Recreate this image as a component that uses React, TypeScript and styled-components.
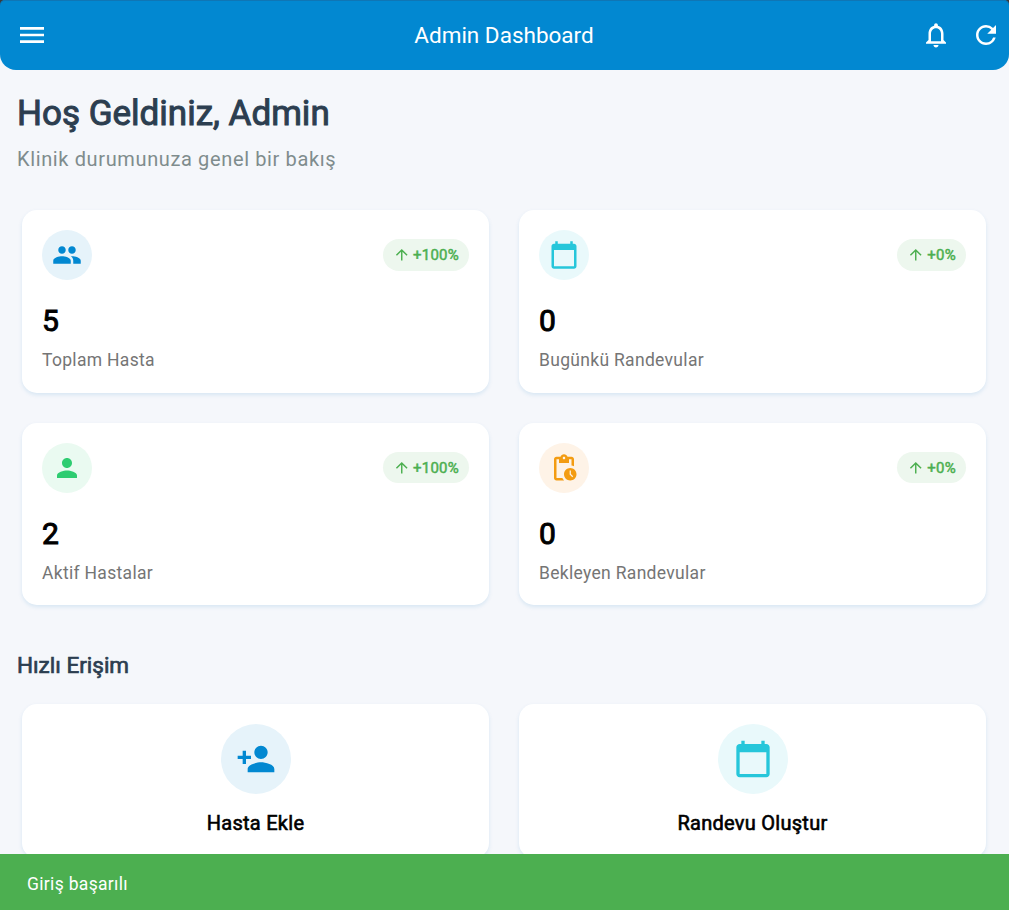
import React from "react";
import styled, { createGlobalStyle } from "styled-components";
import type { IconType } from "react-icons";
import {
  MdMenu,
  MdNotificationsNone,
  MdRefresh,
  MdPeople,
  MdPerson,
  MdCalendarToday,
  MdPendingActions,
  MdPersonAdd,
  MdArrowUpward,
} from "react-icons/md";

const GlobalStyle = createGlobalStyle`
  * { box-sizing: border-box; }
  html, body { margin: 0; padding: 0; }
  body {
    font-family: Roboto, "Liberation Sans", sans-serif;
    background: #f5f7fb;
    overflow: hidden;
  }
  svg { display: block; flex: none; }
`;

const Screen = styled.div`
  height: 910px;
  display: flex;
  flex-direction: column;
  overflow: hidden;
`;

const TopFrame = styled.div`
  flex: none;
  background: linear-gradient(#3a3a3c 0 8px, #f5f7fb 8px);
`;

const AppBar = styled.header`
  height: 70px;
  display: grid;
  grid-template-columns: 1fr auto 1fr;
  align-items: center;
  padding: 0 8px;
  color: #fff;
  background: #0288d1;
  border-radius: 5px 5px 16px 16px;
  box-shadow: inset 0 1px 0 #0f76b5;
`;

const MenuSlot = styled.div`
  padding-left: 8px;
`;

const AppTitle = styled.h1`
  margin: 0;
  padding-right: 1px;
  font-size: 22.5px;
  font-weight: 400;
  line-height: 30px;
`;

const BarActions = styled.div`
  display: flex;
  justify-content: flex-end;
  gap: 20px;
`;

const Content = styled.main`
  flex: 1;
  min-height: 0;
  overflow: hidden;
  padding: 23px 18px 0 17px;
`;

const Welcome = styled.h2`
  margin: 0;
  font-size: 35px;
  font-weight: 400;
  line-height: 42px;
  -webkit-text-stroke: 1px currentColor;
  color: #2c3e50;
`;

const Subtitle = styled.p`
  margin: 12px 0 0;
  font-size: 20px;
  line-height: 24px;
  letter-spacing: 0.63px;
  color: #7f8c8d;
`;

const CardGrid = styled.div<{ $top: number }>`
  display: grid;
  grid-template-columns: 467px 467px;
  gap: 30px;
  padding-left: 5px;
  margin-top: ${(p) => p.$top}px;
`;

const Card = styled.section`
  background: #fff;
  border-radius: 15px;
  box-shadow: 0 2px 4px rgba(2, 119, 189, 0.12);
`;

const StatCard = styled(Card)`
  height: 182.5px;
  padding: 20px;
`;

const StatTop = styled.div`
  display: flex;
  align-items: center;
  justify-content: space-between;
`;

const IconCircle = styled.div<{ $size: number; $color: string; $bg: string }>`
  width: ${(p) => p.$size}px;
  height: ${(p) => p.$size}px;
  border-radius: 50%;
  display: flex;
  align-items: center;
  justify-content: center;
  color: ${(p) => p.$color};
  background: ${(p) => p.$bg};
`;

const Badge = styled.div`
  height: 31.5px;
  display: flex;
  align-items: center;
  gap: 2.5px;
  padding: 0 10px;
  border-radius: 16px;
  font-size: 15px;
  letter-spacing: 0.25px;
  color: #4caf50;
  background: #edf7ee;
`;

const BadgeText = styled.span`
  padding-top: 1.5px;
  line-height: 19px;
  -webkit-text-stroke: 0.5px currentColor;
`;

const StatValue = styled.div`
  margin-top: 23px;
  font-size: 30px;
  line-height: 36px;
  -webkit-text-stroke: 1px currentColor;
  color: #000;
`;

const StatLabel = styled.div`
  margin-top: 11px;
  font-size: 17.5px;
  line-height: 21px;
  letter-spacing: 0.31px;
  color: #757575;
`;

const SectionTitle = styled.h3`
  margin: 46px 0 0;
  font-size: 22.5px;
  font-weight: 400;
  line-height: 28px;
  -webkit-text-stroke: 0.7px currentColor;
  color: #2c3e50;
`;

const ActionCard = styled(Card)`
  height: 154px;
  padding-top: 20px;
  display: flex;
  flex-direction: column;
  align-items: center;
`;

const ActionLabel = styled.div`
  margin-top: 17px;
  font-size: 20px;
  line-height: 24px;
  letter-spacing: 0.27px;
  -webkit-text-stroke: 0.6px currentColor;
  color: #000;
`;

const Snackbar = styled.footer`
  flex: none;
  height: 56px;
  display: flex;
  align-items: center;
  padding: 4px 27px 0;
  font-size: 17.5px;
  line-height: 22px;
  letter-spacing: 0.32px;
  color: #fff;
  background: #4caf50;
`;

type Stat = { icon: IconType; color: string; bg: string; value: number; label: string; change: string };

const stats: Stat[] = [
  { icon: MdPeople, color: "#0288d1", bg: "#e6f3fa", value: 5, label: "Toplam Hasta", change: "+100%" },
  { icon: MdCalendarToday, color: "#26c6da", bg: "#e9f9fb", value: 0, label: "Bugünkü Randevular", change: "+0%" },
  { icon: MdPerson, color: "#2ecc71", bg: "#eafaf1", value: 2, label: "Aktif Hastalar", change: "+100%" },
  { icon: MdPendingActions, color: "#f39c12", bg: "#fef3e7", value: 0, label: "Bekleyen Randevular", change: "+0%" },
];

const actions = [
  { icon: MdPersonAdd, color: "#0288d1", bg: "#e6f3fa", label: "Hasta Ekle" },
  { icon: MdCalendarToday, color: "#26c6da", bg: "#e9f9fb", label: "Randevu Oluştur" },
];

export default function App() {
  return (
    <Screen>
      <GlobalStyle />
      <TopFrame>
        <AppBar>
          <MenuSlot>
            <MdMenu size={32} />
          </MenuSlot>
          <AppTitle>Admin Dashboard</AppTitle>
          <BarActions>
            <MdNotificationsNone size={30} />
            <MdRefresh size={30} />
          </BarActions>
        </AppBar>
      </TopFrame>
      <Content>
        <Welcome>Hoş Geldiniz, Admin</Welcome>
        <Subtitle>Klinik durumunuza genel bir bakış</Subtitle>
        <CardGrid $top={39}>
          {stats.map(({ icon: Icon, ...s }) => (
            <StatCard key={s.label}>
              <StatTop>
                <IconCircle $size={50} $color={s.color} $bg={s.bg}>
                  <Icon size={30} />
                </IconCircle>
                <Badge>
                  <MdArrowUpward size={17.5} />
                  <BadgeText>{s.change}</BadgeText>
                </Badge>
              </StatTop>
              <StatValue>{s.value}</StatValue>
              <StatLabel>{s.label}</StatLabel>
            </StatCard>
          ))}
        </CardGrid>
        <SectionTitle>Hızlı Erişim</SectionTitle>
        <CardGrid $top={25}>
          {actions.map(({ icon: Icon, ...a }) => (
            <ActionCard key={a.label}>
              <IconCircle $size={70} $color={a.color} $bg={a.bg}>
                <Icon size={40} />
              </IconCircle>
              <ActionLabel>{a.label}</ActionLabel>
            </ActionCard>
          ))}
        </CardGrid>
      </Content>
      <Snackbar>Giriş başarılı</Snackbar>
    </Screen>
  );
}
